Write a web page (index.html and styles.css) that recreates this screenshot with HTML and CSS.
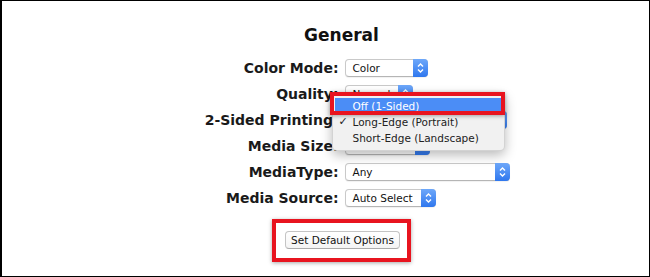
FILE: index.html
```html
<!DOCTYPE html>
<html>
<head>
<meta charset="utf-8">
<title>General</title>
<link rel="stylesheet" href="styles.css">
</head>
<body>
<div class="frame">
  <div class="page">
    <h2 class="title">General</h2>
    <div class="form">
      <div class="label">Color Mode:</div>
      <div class="field">
        <span class="popup w-color"><span class="value">Color</span><span class="arrows"><svg width="15" height="18" viewBox="0 0 15 18"><path d="M5 7.5 L7.5 5 L10 7.5 M5 10.5 L7.5 13 L10 10.5" fill="none" stroke="#fff" stroke-width="1.4"/></svg></span></span>
      </div>

      <div class="label">Quality:</div>
      <div class="field">
        <span class="popup w-quality"><span class="value">Normal</span><span class="arrows"><svg width="15" height="18" viewBox="0 0 15 18"><path d="M5 7.5 L7.5 5 L10 7.5 M5 10.5 L7.5 13 L10 10.5" fill="none" stroke="#fff" stroke-width="1.4"/></svg></span></span>
      </div>

      <div class="label">2-Sided Printing:</div>
      <div class="field open">
        <span class="popup w-sided"><span class="value">Long-Edge (Portrait)</span><span class="arrows"><svg width="15" height="18" viewBox="0 0 15 18"><path d="M5 7.5 L7.5 5 L10 7.5 M5 10.5 L7.5 13 L10 10.5" fill="none" stroke="#fff" stroke-width="1.4"/></svg></span></span>
        <div class="menu">
          <div class="item selected">Off (1-Sided)</div>
          <div class="item checked"><span class="check">&#10003;</span>Long-Edge (Portrait)</div>
          <div class="item">Short-Edge (Landscape)</div>
          <div class="mark mark-item"></div>
        </div>
      </div>

      <div class="label">Media Size:</div>
      <div class="field">
        <span class="popup w-size"><span class="value">Letter</span><span class="arrows"><svg width="15" height="18" viewBox="0 0 15 18"><path d="M5 7.5 L7.5 5 L10 7.5 M5 10.5 L7.5 13 L10 10.5" fill="none" stroke="#fff" stroke-width="1.4"/></svg></span></span>
      </div>

      <div class="label">MediaType:</div>
      <div class="field">
        <span class="popup w-type"><span class="value">Any</span><span class="arrows"><svg width="15" height="18" viewBox="0 0 15 18"><path d="M5 7.5 L7.5 5 L10 7.5 M5 10.5 L7.5 13 L10 10.5" fill="none" stroke="#fff" stroke-width="1.4"/></svg></span></span>
      </div>

      <div class="label">Media Source:</div>
      <div class="field">
        <span class="popup w-source"><span class="value">Auto Select</span><span class="arrows"><svg width="15" height="18" viewBox="0 0 15 18"><path d="M5 7.5 L7.5 5 L10 7.5 M5 10.5 L7.5 13 L10 10.5" fill="none" stroke="#fff" stroke-width="1.4"/></svg></span></span>
      </div>
    </div>

    <div class="actions">
      <div class="mark mark-button">
        <button class="btn">Set Default Options</button>
      </div>
    </div>
  </div>
</div>
</body>
</html>
```

FILE: styles.css
```css
body {
margin:0;
background:#fff;
font-family:"DejaVu Sans", Verdana, sans-serif;
}

.frame {
box-sizing:border-box;
width:650px;
height:277px;
border-style:solid;
border-color:#000;
border-width:1px 1px 1px 2px;
background:#fff;
overflow:hidden;
}

.page {
padding-left:32px;
}

.title {
margin:0;
padding-top:24px;
height:20px;
line-height:20px;
font-size:17px;
font-weight:bold;
color:#111;
text-align:center;
}

.form {
display:grid;
grid-template-columns:1fr 1fr;
grid-auto-rows:26px;
column-gap:6px;
margin-top:10px;
}

.label {
text-align:right;
font-size:14px;
font-weight:bold;
color:#1a1a1a;
line-height:26px;
}

.field {
position:relative;
display:flex;
align-items:center;
}

.field.open {
z-index:5;
}

.popup {
box-sizing:border-box;
display:flex;
align-items:center;
height:18px;
border:1px solid #c9c9c9;
border-bottom-color:#b5b5b5;
border-radius:4px;
background:#fff;
box-shadow:0 1px 1px rgba(0,0,0,0.06);
font-size:10.5px;
color:#111;
}

.popup .value {
flex:1;
padding-left:7px;
white-space:nowrap;
overflow:hidden;
}

.popup .arrows {
width:15px;
height:18px;
margin:-1px -1px -1px 0;
border-radius:0 4px 4px 0;
background:linear-gradient(#6ea8fa, #2f77ee);
display:flex;
}

.w-color {width:83px;}
.w-quality {width:68px;}
.w-sided {width:162px;}
.w-size {width:85px;}
.w-type {width:165px;}
.w-source {width:91px;}

/* popup menu open over the 2-sided row */
.menu {
position:absolute;
left:-13px;
top:-14px;
width:171px;
padding:4px 0;
background:#f1f1f1;
border:1px solid rgba(0,0,0,0.12);
border-radius:5px;
box-shadow:0 4px 12px rgba(0,0,0,0.28);
font-size:10.5px;
color:#222;
}

.item {
position:relative;
height:16px;
line-height:16px;
padding-left:20px;
white-space:nowrap;
}

.item.selected {
margin:0 2px;
padding-left:18px;
background:#4b8df6;
color:#fff;
}

.check {
position:absolute;
left:6px;
top:0;
font-size:11px;
}

.mark {
border:4px solid #e8141f;
box-shadow:0 1px 4px rgba(0,0,0,0.35);
}

.mark-item {
position:absolute;
left:-3px;
top:-2px;
width:167px;
height:15px;
}

.actions {
display:flex;
justify-content:center;
margin-top:8px;
}

.mark-button {
padding:8px 7px 9px 9px;
}

.btn {
display:block;
height:18px;
width:115px;
padding:0;
border:1px solid #c4c4c4;
border-bottom-color:#ababab;
border-radius:4px;
background:linear-gradient(#fff, #f4f4f4);
font-family:"DejaVu Sans", Verdana, sans-serif;
font-size:10.5px;
color:#111;
}
```
